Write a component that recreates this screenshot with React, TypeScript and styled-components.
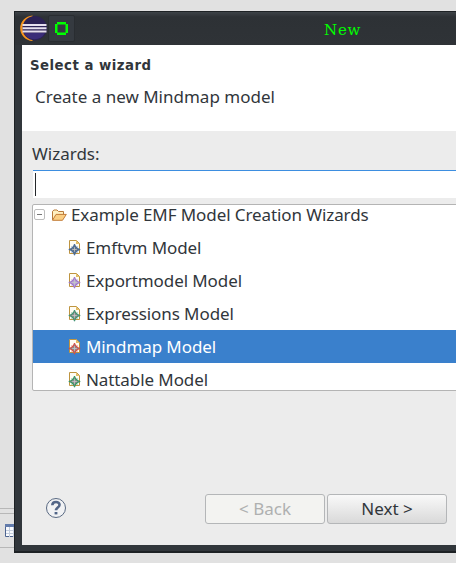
import React from "react";
import styled, { createGlobalStyle } from "styled-components";

const Global = createGlobalStyle`
  * { box-sizing: border-box; }
  html, body { margin: 0; padding: 0; overflow: hidden; }
  body { background: #e1e1e1; font-family: "Noto Sans", sans-serif; color: #31363b; }
`;

const Desktop = styled.div`
  display: flex;
  width: 456px;
  height: 563px;
  padding-top: 11px;
  overflow: hidden;
  background: #e1e1e1;
`;
const Behind = styled.div`
  width: 14px;
  flex: none;
  padding-top: 497px;
`;
const Sash = styled.div`
  height: 6px;
  border-top: 1px solid #b7b7b7;
  border-bottom: 1px solid #b7b7b7;
`;
const BehindTab = styled.div`
  height: 34px;
  padding: 10px 0 0 5px;
  border-bottom: 1px solid #b7b7b7;
  overflow: hidden;
  svg { display: block; }
`;
const Window = styled.div`
  flex: none;
  width: 460px;
  height: 542px;
  display: flex;
  flex-direction: column;
  background: #31363b;
  border: 1px solid #1d2124;
  border-bottom-width: 2px;
  padding: 0 0 6px 7px;
`;
const TitleBar = styled.div`
  height: 33px;
  flex: none;
  display: flex;
  align-items: center;
  margin-left: -7px;
  padding-left: 4px;
  background: linear-gradient(#3d4247 0, #2d3135 5px, #2f3337 100%);
`;
const PinButton = styled.div`
  width: 27px;
  height: 27px;
  margin-left: 1px;
  border: 1px solid #292d31;
  border-radius: 2px;
  background: #353a40;
  display: grid;
  place-items: center;
`;
const WindowTitle = styled.div`
  margin: 3px 0 0 249px;
  font: 15px/20px "DejaVu Serif", serif;
  letter-spacing: 0.8px;
  color: #00ff00;
`;
const Content = styled.div`
  flex: 1;
  display: flex;
  flex-direction: column;
  background: #ececec;
`;
const Header = styled.div`
  height: 86px;
  background: #fff;
  padding: 12px 0 0 8px;
`;
const Heading = styled.div`
  font: bold 13.3px/18px "DejaVu Sans", sans-serif;
  letter-spacing: 0.48px;
`;
const Message = styled.div`
  margin: 10px 0 0 5px;
  font-size: 17px;
  line-height: 24px;
`;
const Body = styled.div`
  display: flex;
  flex-direction: column;
  padding: 11px 0 0 10px;
`;
const Label = styled.label`
  height: 28px;
  font-size: 17px;
  line-height: 24px;
`;
const Filter = styled.div`
  height: 28px;
  margin-left: 1px;
  padding: 2px 0 0 2px;
  background: #fff;
  border-top: 1px solid #3d8ee0;
`;
const Caret = styled.div`
  width: 1px;
  height: 23px;
  background: #25282b;
`;
const Tree = styled.div`
  height: 187px;
  margin-top: 6px;
  border: 1px solid #b4b4b4;
  border-radius: 2px;
  background: #fff;
  overflow: hidden;
`;
const Row = styled.div<{ $root?: boolean; $selected?: boolean }>`
  height: 33px;
  margin-top: ${p => (p.$root ? "-7px" : "0")};
  padding-left: ${p => (p.$root ? "1px" : "34px")};
  display: flex;
  align-items: center;
  font-size: 17px;
  line-height: 24px;
  letter-spacing: -0.09px;
  white-space: nowrap;
  color: ${p => (p.$selected ? "#fff" : "inherit")};
  background: ${p => (p.$selected ? "#3a80cc" : "transparent")};
  svg { flex: none; }
`;
const Expander = styled.div`
  width: 11px;
  height: 11px;
  border: 1px solid #bdbdbd;
  border-radius: 2px;
  display: grid;
  place-items: center;
  &::after { content: ""; width: 5px; height: 1px; background: #777; }
`;
const FolderSlot = styled.div`
  display: flex;
  margin: 0 1px 0 6px;
`;
const RowText = styled.span`
  margin-left: 3px;
`;
const Footer = styled.div`
  margin-top: 103px;
  padding-left: 13px;
  display: flex;
  align-items: center;
  height: 30px;
`;
const HelpButton = styled.div`
  display: flex;
  margin-bottom: 2px;
`;
const Button = styled.button<{ $disabled?: boolean }>`
  width: 120px;
  height: 30px;
  margin-left: ${p => (p.$disabled ? "138px" : "2px")};
  padding: 0;
  border: 1px solid #b4b6b8;
  border-radius: 3px;
  font: 17px/24px "Noto Sans", sans-serif;
  color: ${p => (p.$disabled ? "#afb0b0" : "#31363b")};
  background: ${p => (p.$disabled ? "#f3f3f1" : "linear-gradient(#f9f9f9, #d9d9d9)")};
`;

const EclipseLogo = () => (
  <svg width="28" height="27" viewBox="0 0 28 27">
    <path d="M13.5 .5A13.5 12.8 0 0 0 13.5 26z" fill="#f7941e" />
    <circle cx="15.7" cy="13.2" r="12.2" fill="#2c2255" />
    <path d="M5 18h21a12 12 0 0 1-21 0" fill="#3b2d78" />
    <path d="M3.5 10h24M3.5 13.3h24M3.5 16.5h24" stroke="#e6e0ee" strokeWidth="2" />
  </svg>
);

const PinRing = () => (
  <svg width="13" height="13" viewBox="0 0 13 13">
    <path d="M2 1.25h9M2 11.75h9M1.25 2v9M11.75 2v9" stroke="#00ff00" strokeWidth="2.5" />
  </svg>
);

const Folder = () => (
  <svg width="16" height="16" viewBox="0 0 16 16">
    <path d="M1.5 13V4.3L3 3h3l1.5 1.5h5v3" fill="#fff0c0" stroke="#b97a3a" />
    <path d="M1.5 13.3L5 7.4h10.3l-3.8 5.9z" fill="#fbcf84" stroke="#c27c38" />
  </svg>
);

const ModelIcon = ({ tint, core }: { tint: string; core: string }) => (
  <svg width="16" height="16" viewBox="0 0 16 16">
    <path d="M2.5.5h7l3 3v10h-10z" fill="#fffdf4" stroke="#be9440" />
    <path d="M9 .5V4h3.5z" fill="#e4bc64" />
    <path d="M7.5 4l1.6 3.9 4.1 1.6-4.1 1.6-1.6 4.1-1.6-4.1-4.1-1.6 4.1-1.6z" fill={core} stroke={tint} strokeWidth="1" />
    <path d="M4.6 6.6l1.2 1.2M10.4 6.6L9.2 7.8M4.6 12.4l1.2-1.2M10.4 12.4l-1.2-1.2" stroke={tint} strokeWidth="1.3" />
    <path d="M7.5 7.2v4.6M5.2 9.5h4.6" stroke="#c4c8ca" strokeWidth=".8" />
  </svg>
);

const Help = () => (
  <svg width="22" height="22" viewBox="0 0 22 22">
    <circle cx="11" cy="11" r="9.5" fill="#f1f2f4" stroke="#596982" strokeWidth="1" />
    <path d="M7.3 8.2C7.5 3.8 14.7 4 14.5 8c-.1 2.5-3.5 2.5-3.5 5.2" fill="none" stroke="#526587" strokeWidth="2.6" />
    <path d="M9.6 15h2.8v2.4H9.6z" fill="#526587" />
  </svg>
);

const TableIcon = () => (
  <svg width="16" height="14" viewBox="0 0 16 14">
    <path d="M.5.5h15v12H.5z" fill="#f8fafd" stroke="#4d6490" />
    <path d="M0 0h16v3H0z" fill="#627bab" />
    <path d="M4.5 3v10M8.5 3v10M1 6.5h15M1 9.5h15" stroke="#c3cddd" />
  </svg>
);

const models = [
  { name: "Emftvm Model", tint: "#456b9b", core: "#637080" },
  { name: "Exportmodel Model", tint: "#9b75cc", core: "#b9a5cf" },
  { name: "Expressions Model", tint: "#3c9272", core: "#8b8888" },
  { name: "Mindmap Model", tint: "#d64b42", core: "#8b8888", selected: true },
  { name: "Nattable Model", tint: "#2d9662", core: "#8b8888" },
];

export default function App() {
  return (
    <>
      <Global />
      <Desktop>
        <Behind>
          <Sash />
          <BehindTab><TableIcon /></BehindTab>
        </Behind>
        <Window>
          <TitleBar>
            <EclipseLogo />
            <PinButton><PinRing /></PinButton>
            <WindowTitle>New</WindowTitle>
          </TitleBar>
          <Content>
            <Header>
              <Heading>Select a wizard</Heading>
              <Message>Create a new Mindmap model</Message>
            </Header>
            <Body>
              <Label>Wizards:</Label>
              <Filter><Caret /></Filter>
              <Tree>
                <Row $root>
                  <Expander />
                  <FolderSlot><Folder /></FolderSlot>
                  <RowText>Example EMF Model Creation Wizards</RowText>
                </Row>
                {models.map(m => (
                  <Row key={m.name} $selected={m.selected}>
                    <ModelIcon tint={m.tint} core={m.core} />
                    <RowText>{m.name}</RowText>
                  </Row>
                ))}
              </Tree>
              <Footer>
                <HelpButton><Help /></HelpButton>
                <Button $disabled>&lt; Back</Button>
                <Button>Next &gt;</Button>
              </Footer>
            </Body>
          </Content>
        </Window>
      </Desktop>
    </>
  );
}
